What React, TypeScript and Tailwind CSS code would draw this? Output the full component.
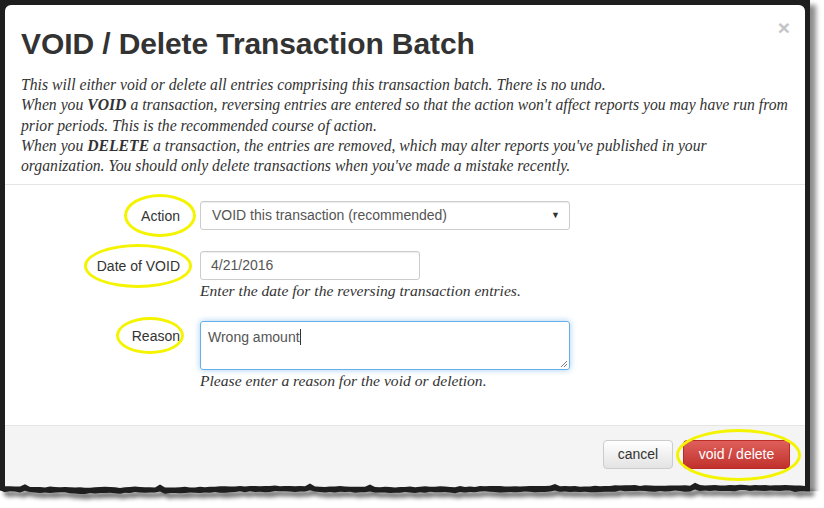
import React from "react";

const serif = { fontFamily: '"Liberation Serif", "Times New Roman", serif' };

// torn paper edge along the bottom of the screenshot
const edge = (() => {
  let s = 23;
  const rnd = () => {
    s = (s * 9301 + 49297) % 233280;
    return s / 233280;
  };
  const top: [number, number][] = [];
  const bot: [number, number][] = [];
  let drift = 0;
  for (let x = 0; x <= 812; x += 5) {
    drift += (rnd() - 0.5) * 0.8;
    drift = Math.max(-1.5, Math.min(1.5, drift));
    const bump = rnd() > 0.93 ? -2.5 : 0;
    top.push([x, 8 + drift + bump + rnd() * 0.8]);
    bot.push([x, 13.5 + drift + bump * 0.7 + rnd() * 1.2]);
  }
  const line = (pts: [number, number][]) => pts.map(([x, y]) => `L${x},${y.toFixed(1)}`).join(" ");
  const band = `M0,${top[0][1].toFixed(1)} ${line(top)} ${line([...bot].reverse())} Z`;
  const white = `M0,${bot[0][1].toFixed(1)} ${line(bot)} L824,${bot[bot.length - 1][1].toFixed(1)} L824,30 L0,30 Z`;
  return { band, white };
})();

function Ellipse({ className }: { className: string }) {
  return <div className={`absolute rounded-[50%] border-[3px] border-[#f4f400] pointer-events-none ${className}`} />;
}

export default function App() {
  return (
    <div className="relative w-[824px] h-[508px] bg-white overflow-hidden" style={{ fontFamily: '"Liberation Sans", Arial, sans-serif' }}>
      <div className="w-[810px] h-[494px] bg-[#1e1e1e] pt-[5px] px-[5px] shadow-[6px_5px_5px_rgba(0,0,0,0.45)]">
        <div className="h-full bg-white rounded-t-[6px] flex flex-col text-[#333]">
          {/* header */}
          <div className="relative px-[16px] pt-[19px] pb-[8px] border-b border-[#e5e5e5]">
            <span className="absolute right-[15px] top-[12px] text-[21px] font-bold text-[#c4c4c4] leading-none">×</span>
            <h1 className="text-[30px] font-bold leading-[40px] tracking-[-0.1px]">VOID / Delete Transaction Batch</h1>
            <div className="mt-[11px] italic text-[15.7px] leading-[20.25px] whitespace-nowrap" style={serif}>
              <div>This will either void or delete all entries comprising this transaction batch. There is no undo.</div>
              <div>
                When you <b>VOID</b> a transaction, reversing entries are entered so that the action won't affect reports you may have run from
              </div>
              <div>prior periods. This is the recommended course of action.</div>
              <div>
                When you <b>DELETE</b> a transaction, the entries are removed, which may alter reports you've published in your
              </div>
              <div>organization. You should only delete transactions when you've made a mistake recently.</div>
            </div>
          </div>

          {/* body */}
          <div className="flex-1 pt-[16px] text-[14px]">
            <div className="flex items-start gap-[20px]">
              <label className="w-[175px] text-right pt-[5px] leading-[20px]">Action</label>
              <div className="w-[370px] h-[29px] border border-[#ccc] rounded-[3px] flex items-center justify-between pl-[11px] pr-[9px] text-[#555] shadow-[inset_0_1px_1px_rgba(0,0,0,0.075)]">
                <span>VOID this transaction (recommended)</span>
                <span className="text-[9px] text-[#333]">▼</span>
              </div>
            </div>

            <div className="flex items-start gap-[20px] mt-[21px]">
              <label className="w-[175px] text-right pt-[5px] leading-[20px]">Date of VOID</label>
              <div>
                <div className="w-[220px] h-[29px] border border-[#ccc] rounded-[3px] flex items-center pl-[10px] text-[#555] shadow-[inset_0_1px_1px_rgba(0,0,0,0.075)]">
                  4/21/2016
                </div>
                <p className="italic text-[15.6px] leading-[20px] mt-px" style={serif}>
                  Enter the date for the reversing transaction entries.
                </p>
              </div>
            </div>

            <div className="flex items-start gap-[20px] mt-[20px]">
              <label className="w-[175px] text-right pt-[5px] leading-[20px]">Reason</label>
              <div>
                <div className="relative w-[370px] h-[49px] border border-[#66afe9] rounded-[3px] pl-[7px] pt-[5px] text-[#555] shadow-[0_0_6px_rgba(102,175,233,0.6)]">
                  Wrong amount<span className="inline-block w-px h-[16px] bg-[#333] align-[-3px]" />
                  <svg className="absolute right-[1px] bottom-[1px]" width="8" height="8" viewBox="0 0 8 8">
                    <path d="M7 1L1 7M7 4L4 7" stroke="#777" strokeWidth="1" />
                  </svg>
                </div>
                <p className="italic text-[15.6px] leading-[20px] mt-px" style={serif}>
                  Please enter a reason for the void or deletion.
                </p>
              </div>
            </div>
          </div>

          {/* footer */}
          <div className="h-[69px] bg-[#f4f4f4] border-t border-[#e5e5e5] flex justify-end items-start gap-[10px] pt-[14px] pr-[15px] text-[14px]">
            <button className="h-[29px] w-[70px] rounded-[4px] border border-[#ccc] bg-gradient-to-b from-white to-[#e3e3e3] text-[#333]">
              cancel
            </button>
            <button className="h-[29px] w-[107px] rounded-[4px] border border-[#b92c28] bg-gradient-to-b from-[#df5f5b] to-[#c1302c] text-white">
              void / delete
            </button>
          </div>
        </div>
      </div>

      {/* torn bottom edge */}
      <svg className="absolute left-0 top-[478px]" width="824" height="30" viewBox="0 0 824 30">
        <defs>
          <filter id="blur" x="-5%" y="-50%" width="110%" height="200%">
            <feGaussianBlur stdDeviation="2.2" />
          </filter>
        </defs>
        <path d={edge.white} fill="#fff" />
        <path d={edge.band} fill="#000" opacity="0.55" transform="translate(4,5)" filter="url(#blur)" />
        <path d={edge.band} fill="#1e1e1e" />
      </svg>

      {/* yellow annotation rings */}
      <Ellipse className="left-[124px] top-[194px] w-[72px] h-[43px]" />
      <Ellipse className="left-[84px] top-[244px] w-[108px] h-[44px]" />
      <Ellipse className="left-[116px] top-[317px] w-[68px] h-[37px]" />
      <Ellipse className="left-[676px] top-[429px] w-[125px] h-[52px]" />
    </div>
  );
}
